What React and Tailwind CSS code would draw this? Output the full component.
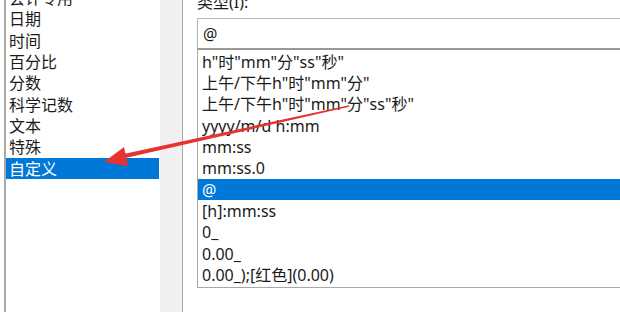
import React from 'react';

const categories = ['会计专用', '日期', '时间', '百分比', '分数', '科学记数', '文本', '特殊', '自定义'];

const formats = [
  'h"时"mm"分"ss"秒"',
  '上午/下午h"时"mm"分"',
  '上午/下午h"时"mm"分"ss"秒"',
  'yyyy/m/d h:mm',
  'mm:ss',
  'mm:ss.0',
  '@',
  '[h]:mm:ss',
  '0_',
  '0.00_',
  '0.00_);[红色](0.00)'
];

const font = { fontFamily: '"Noto Sans", "Noto Sans CJK SC", sans-serif' };

export default function App() {
  return (
    <div
      className="relative flex w-[620px] h-[312px] overflow-hidden bg-white text-[16px] text-[#1b1b1b]"
      style={font}
    >
      {/* category list */}
      <div className="ml-[4px] flex h-full w-[179px] shrink-0 border-l-2 border-r border-[#a9a9a9]">
        <ul className="-mt-[12.6px] w-[153px] shrink-0">
          {categories.map((c, i) => (
            <li
              key={c}
              className={
                'flex h-[21.33px] items-center pl-[3px] leading-none ' +
                (i === categories.length - 1 ? 'bg-[#0078d7] text-white' : '')
              }
            >
              {c}
            </li>
          ))}
        </ul>
        <div className="ml-px flex-1 bg-[#f0f0f0]" />
      </div>

      {/* type panel */}
      <div className="shrink-0 pl-[14px]">
        <div className="-mt-[8px] h-[26px] leading-[20px]">类型(I):</div>
        <div className="flex h-[32px] w-[440px] items-center border border-[#b4b4b4] border-b-2 border-b-[#999] pl-[5px]">
          @
        </div>
        <ul className="h-[238px] w-[440px] border border-t-0 border-[#a9a9a9] pt-px">
          {formats.map((f, i) => (
            <li
              key={f}
              className={
                'flex h-[21.33px] items-center pl-[4px] leading-none whitespace-pre ' +
                (i === 6 ? 'bg-[#0078d7] text-white' : '')
              }
            >
              {f}
            </li>
          ))}
        </ul>
      </div>

      {/* red annotation arrow, tapered towards the tail */}
      <svg className="absolute left-0 top-0 pointer-events-none" width="620" height="312">
        <polygon points="349,105.3 349.3,106.8 121,159 119,155" fill="#e8322f" />
        <polygon points="104,162 124,147 128,166" fill="#e8322f" />
      </svg>
    </div>
  );
}
